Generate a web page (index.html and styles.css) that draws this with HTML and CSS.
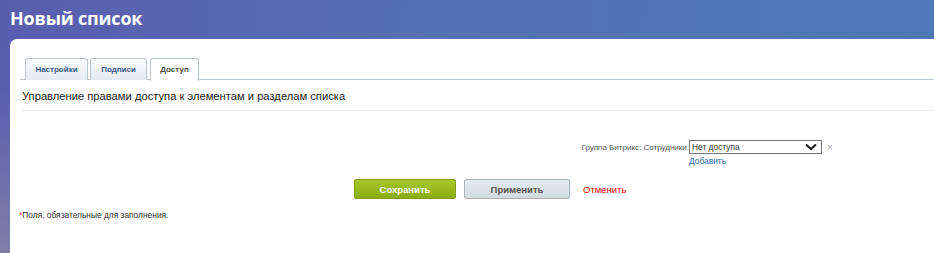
FILE: index.html
```html
<!DOCTYPE html>
<html lang="ru">
  <head>
    <meta charset="UTF-8" />
    <meta name="viewport" content="width=device-width, initial-scale=1.0" />
    <title>Новый список</title>
    <link rel="stylesheet" href="styles.css">
  </head>
  <body>
    <h1 class="page-title">Новый список</h1>
    <div class="workarea">
      <div class="tabs">
        <span class="tab tab-settings">Настройки</span>
        <span class="tab tab-labels">Подписи</span>
        <span class="tab tab-access active">Доступ</span>
      </div>
      <div class="section-title">Управление правами доступа к элементам и разделам списка</div>

      <div class="rights">
        <div class="rights-label">Группа Битрикс: Сотрудники:</div>
        <div class="rights-field">
          <div class="select-row">
            <div class="select">
              <span>Нет доступа</span>
              <svg class="chevron" width="12" height="8" viewBox="0 0 12 8">
                <path d="M1 1.5 L6 6 L11 1.5" fill="none" stroke="#222" stroke-width="2.2" />
              </svg>
            </div>
            <span class="remove">&times;</span>
          </div>
          <a class="add-link" href="#">Добавить</a>
        </div>
      </div>

      <div class="buttons">
        <button class="btn btn-save">Сохранить</button>
        <button class="btn btn-apply">Применить</button>
        <a class="cancel" href="#">Отменить</a>
      </div>

      <p class="required-note"><span class="star">*</span>Поля, обязательные для заполнения.</p>
    </div>
  </body>
</html>
```

FILE: styles.css
```css
* {
  box-sizing: border-box;
}

html,
body {
  height: 100%;
}

body {
  margin: 0;
  font-family: "Liberation Sans", Arial, sans-serif;
  background:
    linear-gradient(to bottom, rgba(140, 135, 165, 0) 35%, rgba(140, 135, 165, 0.75) 100%),
    linear-gradient(100deg, #5a5daf 0%, #5470b4 45%, #4d7ab9 100%);
  overflow: hidden;
  display: flex;
  flex-direction: column;
}

.page-title {
  margin: 0;
  padding: 6px 0 0 10px;
  height: 39px;
  color: #fff;
  font-family: "Open Sans", Arial, sans-serif;
  font-size: 18px;
  font-weight: 700;
  letter-spacing: -0.2px;
}

.workarea {
  flex: 1;
  margin-left: 10px;
  background: #fff;
  border-top-left-radius: 7px;
  padding: 19px 0 0 10px;
}

.tabs {
  display: flex;
  gap: 2px;
  padding-left: 5px;
  border-bottom: 1px solid #b9c6cc;
  height: 22px;
}

.tab {
  height: 22px;
  text-align: center;
  font-size: 8px;
  font-weight: 700;
  line-height: 21px;
  color: #3a5a86;
  border: 1px solid #b8c6cf;
  border-bottom: none;
  border-radius: 3px 3px 0 0;
  background: linear-gradient(#fbfcfd, #e2ebf1);
}

.tab-settings {
  width: 63px;
}

.tab-labels {
  width: 57px;
}

.tab-access {
  width: 49px;
}

.tab.active {
  height: 23px;
  color: #4a4a4a;
  background: #fff;
  margin-left: 1px;
}

.section-title {
  margin: 0 0 0 2px;
  padding: 10px 0 8px;
  font-size: 11.2px;
  color: #222;
  border-bottom: 1px solid #eceeef;
}

.rights {
  display: flex;
  margin-top: 29px;
  padding-left: 537px;
}

.rights-label {
  width: 132px;
  text-align: right;
  font-size: 8px;
  color: #555;
  padding-top: 3px;
}

.rights-field {
  display: flex;
  flex-direction: column;
}

.select-row {
  display: flex;
  align-items: center;
}

.select {
  width: 133px;
  height: 14px;
  border: 1px solid #777;
  display: flex;
  align-items: center;
  justify-content: space-between;
  padding: 0 4px 0 2px;
  font-size: 8.4px;
  color: #333;
}

.remove {
  margin-left: 5px;
  font-size: 10px;
  color: #aaa;
}

.add-link {
  margin-top: 2px;
  font-size: 8.4px;
  color: #2a6aa9;
  text-decoration: none;
}

.buttons {
  display: flex;
  align-items: center;
  margin-top: 13px;
  padding-left: 334px;
}

.btn {
  height: 20px;
  width: 102px;
  border-radius: 2px;
  font-family: "Liberation Sans", Arial, sans-serif;
  font-size: 9.5px;
  font-weight: 700;
  padding: 0;
  cursor: pointer;
}

.btn-save {
  color: #fff;
  border: 1px solid #7f9d12;
  background: linear-gradient(#a7c829, #88ac0e);
}

.btn-apply {
  margin-left: 8px;
  width: 106px;
  color: #555;
  border: 1px solid #aab4b9;
  background: linear-gradient(#e4ebee, #d1dbdf);
}

.cancel {
  margin-left: 13px;
  font-size: 9.5px;
  color: #e00000;
  text-decoration: none;
}

.required-note {
  margin: 11px 0 0 -1px;
  font-size: 8.4px;
  color: #333;
}

.star {
  color: #e8304a;
}
```
